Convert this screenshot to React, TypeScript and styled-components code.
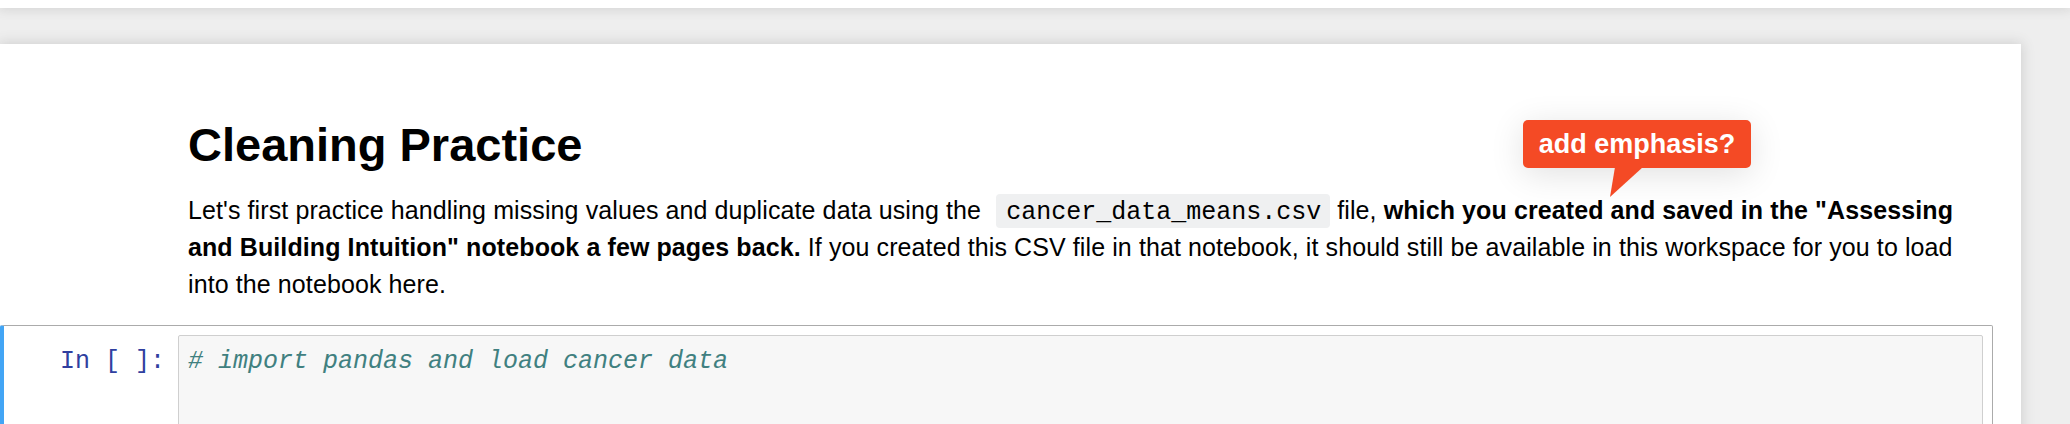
import React from 'react'
import styled, { createGlobalStyle } from 'styled-components'

const GlobalStyle = createGlobalStyle`
  html, body {
    margin: 0;
    padding: 0;
    height: 100%;
    overflow: hidden;
    background: #eeeeee;
    font-family: "Liberation Sans", Arial, Helvetica, sans-serif;
  }
`

const Page = styled.div`
  height: 100vh;
  overflow: hidden;
`

const Header = styled.div`
  position: relative;
  z-index: 2;
  height: 8px;
  background: #fff;
  box-shadow: 0 0 12px 1px rgba(87, 87, 87, 0.2);
`

const Notebook = styled.div`
  position: relative;
  width: 2021px;
  min-height: 420px;
  margin-top: 36px;
  background: #fff;
  box-shadow: 0 0 12px 1px rgba(87, 87, 87, 0.2);
`

const TextCell = styled.div`
  padding: 75px 37px 0 188px;
`

const Title = styled.h1`
  margin: 0;
  font-size: 47px;
  line-height: 52px;
  font-weight: bold;
  color: #000;
`

const Paragraph = styled.p`
  margin: 21px 0 0;
  font-size: 25px;
  letter-spacing: 0.1px;
  line-height: 37px;
  color: #000;
`

const InlineCode = styled.code`
  font-family: "Liberation Mono", "Courier New", monospace;
  font-size: 25px;
  letter-spacing: 0;
  line-height: 1;
  margin-left: 8px;
  padding: 4px 9px 1px 10px;
  background: #eff0f1;
  border-radius: 4px;
  color: #000;
`

const Tooltip = styled.div`
  position: absolute;
  left: 1523px;
  top: 76px;
  width: 228px;
  height: 48px;
  border-radius: 5px;
  background: #f44a25;
  color: #fff;
  font-size: 27px;
  font-weight: bold;
  line-height: 48px;
  text-align: center;
  box-shadow: 0 6px 34px rgba(0, 0, 0, 0.12);
`

const TooltipTail = styled.svg`
  position: absolute;
  left: 87px;
  top: 47px;
`

const CodeCell = styled.div`
  display: flex;
  margin: 22px 28px 0 0;
  padding: 9px 9px 9px 0;
  border: 1px solid #ababab;
  border-left: 4px solid #42a5f5;
  border-radius: 2px;
`

const Prompt = styled.div`
  flex: 0 0 174px;
  box-sizing: border-box;
  padding: 12px 13px 0 0;
  text-align: right;
  font-family: "Liberation Mono", "Courier New", monospace;
  font-size: 25px;
  line-height: 30px;
  color: #303f9f;
  white-space: pre;
`

const InputArea = styled.div`
  flex: 1;
  min-height: 130px;
  padding: 11px 9px;
  background: #f7f7f7;
  border: 1px solid #cfcfcf;
  border-radius: 2px;
`

const Comment = styled.div`
  font-family: "Liberation Mono", "Courier New", monospace;
  font-size: 25px;
  line-height: 30px;
  font-style: italic;
  color: #408080;
  white-space: pre;
`

const App = () => {
  return (
    <Page>
      <GlobalStyle />
      <Header />
      <Notebook>
        <TextCell>
          <Title>Cleaning Practice</Title>
          <Paragraph>
            Let's first practice handling missing values and duplicate data using the{' '}
            <InlineCode>cancer_data_means.csv</InlineCode> file,{' '}
            <b>
              which you created and saved in the "Assessing and Building Intuition" notebook a
              few pages back.
            </b>{' '}
            If you created this CSV file in that notebook, it should still be available in this
            workspace for you to load into the notebook here.
          </Paragraph>
        </TextCell>
        <Tooltip>
          add emphasis?
          <TooltipTail width="33" height="30" viewBox="0 0 33 30">
            <polygon points="5,0 33,0 0,30" fill="#f44a25" />
          </TooltipTail>
        </Tooltip>
        <CodeCell>
          <Prompt>In [ ]:</Prompt>
          <InputArea>
            <Comment># import pandas and load cancer data</Comment>
          </InputArea>
        </CodeCell>
      </Notebook>
    </Page>
  )
}

export default App
